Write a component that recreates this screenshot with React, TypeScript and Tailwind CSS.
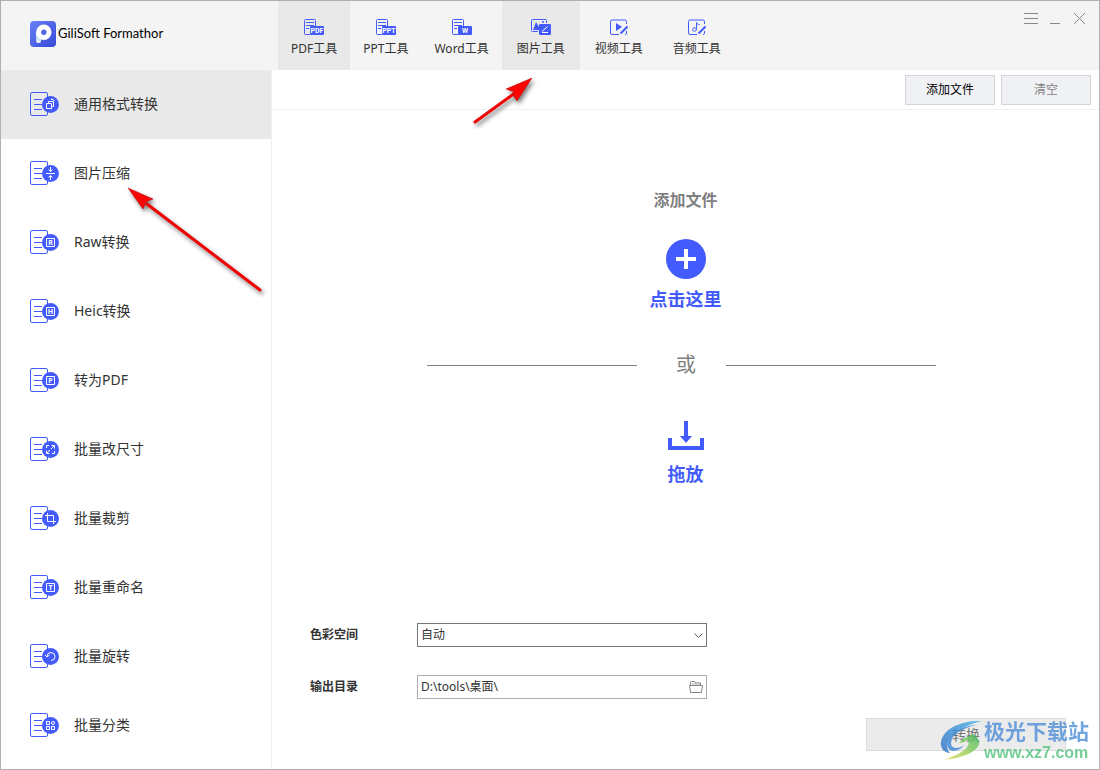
import { useState } from "react";
import type { ReactNode } from "react";

const BLUE = "#435bfc";

const tools = [
  { id: "pdf", label: "PDF工具", pad: "px-[13px]", icon: <DocBadgeIcon text="PDF" /> },
  { id: "ppt", label: "PPT工具", pad: "px-[13px]", icon: <DocBadgeIcon text="PPT" /> },
  { id: "word", label: "Word工具", pad: "px-[13px]", icon: <DocBadgeIcon text="W" /> },
  { id: "image", label: "图片工具", pad: "px-[15px]", icon: <ImageToolIcon /> },
  { id: "video", label: "视频工具", pad: "px-[15px]", icon: <VideoToolIcon /> },
  { id: "audio", label: "音频工具", pad: "px-[15px]", icon: <AudioToolIcon /> },
];

// Glyphs are drawn inside the round badge, whose center is 20.5,12.5
const features: { label: string; glyph: ReactNode }[] = [
  {
    label: "通用格式转换",
    glyph: <path d="M16.5 11.5h5v5h-5zM18.500 11.500v-2M21.500 14.500h2v-5h-5M22 6.500l2.500 2.500M21 7.500h2" />,
  },
  {
    label: "图片压缩",
    glyph: <path d="M16 12.500h9M20.500 6v4.500M20.500 19v-4.500M18.500 8.500l2 2 2-2M18.500 16.500l2-2 2 2" />,
  },
  { label: "Raw转换", glyph: <BoxedLetter letter="R" /> },
  { label: "Heic转换", glyph: <BoxedLetter letter="H" /> },
  { label: "转为PDF", glyph: <BoxedLetter letter="P" /> },
  {
    label: "批量改尺寸",
    glyph: <path d="M16.500 11V8.500H19M24.500 14v2.500H22M21.500 8.500h3v3M19.500 16.500h-3v-3M17 16l3-3M21 12l3-3" />,
  },
  { label: "批量裁剪", glyph: <path d="M15 9.500h8.500V18M17.500 7v8.500H26" /> },
  { label: "批量重命名", glyph: <BoxedLetter letter="T" /> },
  {
    label: "批量旋转",
    glyph: <path d="M17 12.500a4 4 0 1 1 4 4M15 11l2 2 2.500-2" />,
  },
  {
    label: "批量分类",
    glyph: (
      <>
        <path d="M16.500 8.500h3v3h-3zM16.500 13.500h3v3h-3zM21.500 13.500h3v3h-3z" />
        <circle cx="23" cy="10" r="1.500" />
      </>
    ),
  },
];

function BoxedLetter({ letter }: { letter: string }) {
  return (
    <>
      <path d="M16.500 8.500h8v8h-8z" />
      <text x="20.500" y="15" fontSize="7" fontWeight="700" textAnchor="middle" fill="#fff" stroke="none">
        {letter}
      </text>
    </>
  );
}

function FeatureIcon({ children }: { children: ReactNode }) {
  return (
    <svg width="30" height="24" viewBox="0 0 30 24" fill="none" className="shrink-0" aria-hidden="true">
      <rect x="0.500" y="0.500" width="17" height="23" rx="1.500" stroke={BLUE} />
      <path d="M4 7.500h8M4 12.500h8M4 17.500h8" stroke={BLUE} />
      <circle cx="20.500" cy="12.500" r="8.500" fill={BLUE} />
      <g stroke="#fff">{children}</g>
    </svg>
  );
}

function DocBadgeIcon({ text }: { text: string }) {
  return (
    <svg width="20" height="16" viewBox="0 0 20 16" fill="none" aria-hidden="true">
      <path d="M6 15.500H1.500a1 1 0 0 1-1-1v-13a1 1 0 0 1 1-1h9a1 1 0 0 1 1 1V8" stroke={BLUE} />
      <path d="M2 3.500h8M2 6.500h8M2 9.500h3" stroke={BLUE} />
      <rect x="6" y="7" width="14" height="9" rx="1" fill={BLUE} />
      <text x="13" y="14" fontSize="7" fontWeight="700" textAnchor="middle" fill="#fff" className="font-[Roboto,sans-serif]">
        {text}
      </text>
    </svg>
  );
}

function ImageToolIcon() {
  return (
    <svg width="20" height="16" viewBox="0 0 20 16" fill="none" aria-hidden="true">
      <path d="M7 12.500H1.500a1 1 0 0 1-1-1v-10a1 1 0 0 1 1-1h13a1 1 0 0 1 1 1V4" stroke={BLUE} />
      <path d="M2 11l3-8 3 5v3z" fill={BLUE} />
      <circle cx="12" cy="3" r="1" fill={BLUE} />
      <rect x="8" y="5" width="12" height="11" rx="1" fill={BLUE} />
      <path d="M11 12.500l5.500-5M11 13.500h6" stroke="#fff" />
    </svg>
  );
}

function VideoToolIcon() {
  return (
    <svg width="18" height="16" viewBox="0 0 18 16" fill="none" aria-hidden="true">
      <path d="M9 15.500H2a1.500 1.500 0 0 1-1.500-1.500V2.500A1.500 1.500 0 0 1 2 1h13a1.500 1.500 0 0 1 1.500 1.500V5M16.500 12v2a1.500 1.500 0 0 1-1.500 1.500" stroke={BLUE} />
      <path d="M6 4l6 4-6 4z" fill={BLUE} />
      <path d="M10.500 14.500l7-7" stroke={BLUE} strokeWidth="2" />
    </svg>
  );
}

function AudioToolIcon() {
  return (
    <svg width="18" height="16" viewBox="0 0 18 16" fill="none" aria-hidden="true">
      <path d="M9 15.500H2a1.500 1.500 0 0 1-1.500-1.500V2.500A1.500 1.500 0 0 1 2 1h13a1.500 1.500 0 0 1 1.500 1.500V5M16.500 12v2a1.500 1.500 0 0 1-1.500 1.500" stroke={BLUE} />
      <circle cx="6.500" cy="10.500" r="1.800" stroke={BLUE} />
      <path d="M8.500 10.500V3.500c.500 1.500 1.500 2 3 2" stroke={BLUE} />
      <path d="M10.500 14.500l7-7" stroke={BLUE} strokeWidth="2" />
    </svg>
  );
}

function AppLogo() {
  return (
    <svg width="26" height="26" viewBox="0 0 26 26" fill="none" aria-hidden="true">
      <defs>
        <linearGradient id="logoBg" x1="0" y1="0" x2="1" y2="1">
          <stop offset="0" stopColor="#6b80f8" />
          <stop offset="1" stopColor="#3549d6" />
        </linearGradient>
        <linearGradient id="logoTail" x1="0" y1="0" x2="0" y2="1">
          <stop offset="0" stopColor="#ffffff" />
          <stop offset="0.500" stopColor="#b4d2f2" />
          <stop offset="1" stopColor="#ffffff" />
        </linearGradient>
      </defs>
      <rect width="26" height="26" rx="4" fill="url(#logoBg)" />
      <path d="M6 11h5v8.500a2.500 2.500 0 0 1-5 0z" fill="url(#logoTail)" />
      <circle cx="13.800" cy="11.200" r="5.200" stroke="#fff" strokeWidth="5" />
    </svg>
  );
}

function WindowControls() {
  return (
    <div className="flex items-start gap-3 pt-[11px] pr-[13px] text-[#888]">
      <button type="button" aria-label="菜单">
        <svg width="14" height="14" viewBox="0 0 14 14" stroke="currentColor"><path d="M0 1.500h14M0 6.500h14M0 11.500h14" /></svg>
      </button>
      <button type="button" aria-label="最小化">
        <svg width="11" height="14" viewBox="0 0 11 14" stroke="currentColor"><path d="M0 11.500h10" /></svg>
      </button>
      <button type="button" aria-label="关闭">
        <svg width="13" height="14" viewBox="0 0 13 14" stroke="currentColor"><path d="M1 1l11 11M12 1L1 12" /></svg>
      </button>
    </div>
  );
}

function Arrow({ className, width, height, shaft, head }: { className: string; width: number; height: number; shaft: string; head: string }) {
  return (
    <svg
      width={width}
      height={height}
      viewBox={`0 0 ${width} ${height}`}
      className={`pointer-events-none absolute z-10 overflow-visible drop-shadow-[2px_3px_2px_rgba(0,0,0,0.5)] ${className}`}
      aria-hidden="true"
    >
      <path d={shaft} stroke="#f00000" strokeWidth="3" strokeLinecap="round" />
      <path d={head} fill="#fa0505" stroke="#b00000" strokeWidth="0.500" />
    </svg>
  );
}

function Watermark() {
  return (
    <div className="pointer-events-none absolute right-2.5 bottom-1.5 z-10 flex items-center gap-0.5 opacity-80">
      <svg width="42" height="42" viewBox="0 0 42 42" fill="none" aria-hidden="true">
        <defs>
          <linearGradient id="wmBlue" x1="1" y1="0" x2="0" y2="1">
            <stop offset="0" stopColor="#43b4e8" />
            <stop offset="1" stopColor="#2f6cc4" />
          </linearGradient>
          <linearGradient id="wmGreen" x1="0" y1="1" x2="1" y2="0">
            <stop offset="0" stopColor="#e4e04a" />
            <stop offset="1" stopColor="#3dba62" />
          </linearGradient>
        </defs>
        <path d="M42 1C23 0 3 8 1 22c-1 7 4 11 9 11C2 24 10 9 42 1z" fill="url(#wmBlue)" />
        <path d="M36 5C20 9 11 15 11 24c1 5 8 5 13 1-4 6-13 8-16 3C4 18 18 6 36 5z" fill="#3a86d8" />
        <path d="M33 14c13 8 6 22-29 26 14-5 28-12 24-20-3 1-5 3-9 3 4-5 9-6 14-9z" fill="url(#wmGreen)" />
      </svg>
      <div className="flex flex-col font-bold">
        <span className="text-[21px] leading-6 text-[#4f8fd8]">极光下载站</span>
        <span className="font-['Liberation_Sans',sans-serif] text-base leading-5 text-[#52c27c]">www.xz7.com</span>
      </div>
    </div>
  );
}

export default function App() {
  const [feature, setFeature] = useState(0);
  const [output, setOutput] = useState("D:\\tools\\桌面\\");

  return (
    <div className="relative flex min-h-screen flex-col border border-[#b0b0b0] bg-white font-['Noto_Sans','Noto_Sans_CJK_SC',sans-serif] text-xs text-[#333]">
      <header className="flex h-[69px] bg-[#f4f4f4]">
        <div className="flex w-[277px] shrink-0 items-center gap-0.5 pl-[29px] pb-1 text-[13px] text-black">
          <AppLogo />
          <h1 className="font-[Lato,sans-serif]">GiliSoft Formathor</h1>
        </div>
        <nav className="flex flex-1">
          {tools.map((t) => (
            <button
              key={t.id}
              type="button"
              className={`flex flex-col items-center gap-[5px] pt-[18px] whitespace-nowrap hover:bg-[#e9e9e9] ${t.pad} ${t.id === "pdf" || t.id === "image" ? "bg-[#e9e9e9]" : ""}`}
            >
              {t.icon}
              <span className="leading-[18px]">{t.label}</span>
            </button>
          ))}
        </nav>
        <WindowControls />
      </header>

      <div className="flex flex-1">
        <aside className="w-[271px] shrink-0 border-r border-[#f0f0f0]">
          {features.map((f, i) => (
            <button
              key={f.label}
              type="button"
              onClick={() => setFeature(i)}
              className={`flex h-[69px] w-full items-center gap-3.5 pb-px pl-[29px] text-left text-sm ${i === feature ? "bg-[#e9e9e9]" : ""}`}
            >
              <FeatureIcon>{f.glyph}</FeatureIcon>
              <span>{f.label}</span>
            </button>
          ))}
        </aside>

        <main className="flex min-w-0 flex-1 flex-col">
          <div className="flex h-10 items-center justify-end gap-1.5 border-b border-[#f2f2f2] pr-2">
            <button type="button" className="h-[30px] w-[90px] border border-[#d3d5d8] bg-[#f0f1f4] text-black">添加文件</button>
            <button type="button" className="h-[30px] w-[90px] border border-[#d3d5d8] bg-[#f0f1f4] text-[#838383]">清空</button>
          </div>

          {/* Drop zone */}
          <section className="flex flex-1 flex-col items-center pt-[78px]">
            <h2 className="text-base leading-6 font-bold text-[#808080]">添加文件</h2>
            <button type="button" className="mt-[27px] flex flex-col items-center gap-2 text-lg leading-6 font-bold text-[#435bfc]">
              <svg width="40" height="40" viewBox="0 0 40 40" aria-hidden="true">
                <circle cx="20" cy="20" r="20" fill={BLUE} />
                <path d="M20 10v20M10 20h20" stroke="#fff" strokeWidth="4" />
              </svg>
              点击这里
            </button>
            <div className="mt-10 mr-2 flex items-center text-xl leading-7 text-[#808080]">
              <span className="h-px w-[210px] bg-[#808080]" />
              <span className="pr-[30px] pl-[39px]">或</span>
              <span className="h-px w-[210px] bg-[#808080]" />
            </div>
            <div className="mt-[42px] flex flex-col items-center gap-3 text-lg leading-6 font-bold text-[#435bfc]">
              <svg width="36" height="29" viewBox="0 0 36 29" fill="none" aria-hidden="true">
                <path d="M2 17v10h32V17M18 0v16" stroke={BLUE} strokeWidth="4" />
                <path d="M12 15h12l-6 7z" fill={BLUE} />
              </svg>
              拖放
            </div>
          </section>

          {/* Output settings */}
          <form className="flex flex-col gap-7 pl-[38px]">
            <div className="flex items-center">
              <label htmlFor="colorSpace" className="w-[107px] font-bold">色彩空间</label>
              <div className="relative w-[290px]">
                <select id="colorSpace" className="block h-6 w-full appearance-none border border-[#777] bg-white pl-[3px]">
                  <option>自动</option>
                  <option>RGB</option>
                  <option>CMYK</option>
                </select>
                <svg width="9" height="6" viewBox="0 0 9 6" fill="none" className="pointer-events-none absolute top-2.5 right-1" aria-hidden="true">
                  <path d="M0.500 0.500l4 4 4-4" stroke="#555" />
                </svg>
              </div>
            </div>
            <div className="flex items-center">
              <label htmlFor="outputDir" className="w-[107px] font-bold">输出目录</label>
              <div className="flex h-6 w-[290px] items-center border border-[#adadad] pr-[3px] pl-[3px]">
                <input id="outputDir" value={output} onChange={(e) => setOutput(e.target.value)} className="min-w-0 flex-1 outline-none" />
                <button type="button" aria-label="浏览">
                  <svg width="14" height="12" viewBox="0 0 14 12" fill="none" stroke="#858585" aria-hidden="true">
                    <path d="M1.500 10.500v-9a1 1 0 0 1 1-1h3l1 1.500h5v2.500" />
                    <path d="M0.500 4.500h13l-1 7h-11z" fill="#fff" />
                    <path d="M3 3h8" stroke="#b5b5b5" />
                  </svg>
                </button>
              </div>
            </div>
          </form>

          <div className="mt-[19px] mb-[18px] flex justify-end pr-[33px]">
            <button type="button" className="h-[33px] w-[200px] border border-[#dcdcdc] bg-[#ebebeb] text-sm text-[#777]">转换</button>
          </div>
        </main>
      </div>

      <Arrow className="top-[77px] left-[472px]" width={60} height={46} shaft="M2 44L42 15" head="M59 0L33 11l8 3-1 3 4 6z" />
      <Arrow className="top-[186px] left-[126px]" width={134} height={104} shaft="M133 103L20 17" head="M1 1L26 12l-7 3-3 7z" />
      <Watermark />
    </div>
  );
}
